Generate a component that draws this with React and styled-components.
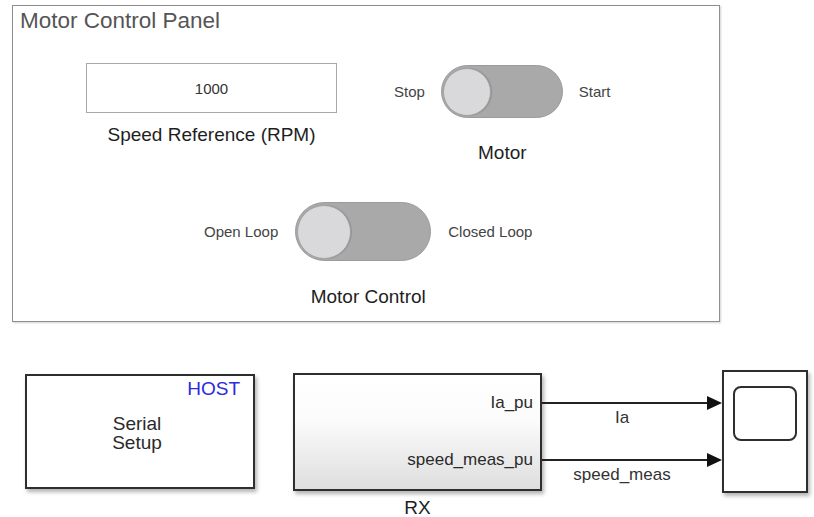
import React from "react";
import styled, { createGlobalStyle } from "styled-components";

const Global = createGlobalStyle`
  html, body { margin: 0; padding: 0; background: #fff; }
  body { font-family: "Liberation Sans", Arial, Helvetica, sans-serif; }
`;

const Page = styled.div`
  width: 814px;
  height: 517px;
  overflow: hidden;
  display: flex;
  flex-direction: column;
  & > * { flex-shrink: 0; }
`;

const Panel = styled.section`
  margin: 5px 0 0 12px;
  width: 708px;
  height: 317px;
  box-sizing: border-box;
  border: 1px solid #8e8e8e;
  box-shadow: 1px 1px 2px rgba(0, 0, 0, 0.18);
  display: flex;
  flex-direction: column;
`;

const Title = styled.h1`
  margin: 2px 0 0 7px;
  font-size: 22.5px;
  font-weight: normal;
  line-height: 26px;
  color: #555;
  white-space: nowrap;
`;

const Row = styled.div`
  display: flex;
  align-items: flex-start;
  margin-top: ${(p) => p.$top}px;
  padding-left: ${(p) => p.$left}px;
`;

const Group = styled.div`
  display: flex;
  flex-direction: column;
  align-items: center;
  margin-left: ${(p) => p.$left || 0}px;
  margin-top: ${(p) => p.$top || 0}px;
`;

const NumberBox = styled.div`
  width: 251px;
  height: 50px;
  box-sizing: border-box;
  border: 1px solid #a8a8a8;
  display: flex;
  align-items: center;
  justify-content: center;
  font-size: 15px;
  color: #333;
`;

const Caption = styled.div`
  margin-top: ${(p) => p.$gap}px;
  font-size: 19px;
  line-height: 22px;
  color: #1e1e1e;
  white-space: nowrap;
`;

const SwitchRow = styled.div`
  display: flex;
  align-items: center;
  gap: ${(p) => p.$gap}px;
`;

const SideLabel = styled.span`
  font-size: 15px;
  color: #444;
  white-space: nowrap;
`;

const Track = styled.div`
  width: ${(p) => p.$w}px;
  height: ${(p) => p.$h}px;
  box-sizing: border-box;
  border-radius: ${(p) => p.$h / 2}px;
  background: #a9a9a9;
  border: 1px solid #9b9b9b;
  display: flex;
  align-items: center;
  padding-left: 1px;
`;

const Knob = styled.div`
  width: ${(p) => p.$d}px;
  height: ${(p) => p.$d}px;
  box-sizing: border-box;
  border-radius: 50%;
  background: #d9d9dc;
  border: 1px solid #a3a3a3;
  box-shadow: 1px 0 1px rgba(0, 0, 0, 0.15);
`;

const Toggle = ({ left, right, w, h, gap }) => (
  <SwitchRow $gap={gap}>
    <SideLabel>{left}</SideLabel>
    <Track $w={w} $h={h}>
      <Knob $d={h - 5} />
    </Track>
    <SideLabel>{right}</SideLabel>
  </SwitchRow>
);

const Diagram = styled.div`
  display: flex;
  align-items: flex-start;
  margin-top: 48px;
`;

const Block = styled.div`
  box-sizing: border-box;
  border: 2px solid #2e2e2e;
  box-shadow: 2px 3px 4px rgba(0, 0, 0, 0.3);
  background: #fff;
  color: #2a2a2a;
`;

const SerialBlock = styled(Block)`
  width: 230px;
  height: 115px;
  margin: 4px 0 0 25px;
  display: flex;
  flex-direction: column;
`;

const HostTag = styled.div`
  align-self: flex-end;
  margin-top: 2px;
  padding-right: 13px;
  font-size: 19px;
  line-height: 22px;
  color: #2a2ae0;
`;

const BlockText = styled.div`
  margin-top: 14px;
  padding-right: 6px;
  text-align: center;
  font-size: 19px;
  line-height: 19px;
`;

const RxColumn = styled.div`
  display: flex;
  flex-direction: column;
  align-items: center;
  margin: 3px 0 0 38px;
`;

const RxBlock = styled(Block)`
  width: 249px;
  height: 118px;
  background: linear-gradient(to bottom, #ffffff 0%, #fbfbfb 40%, #dedede 100%);
  display: flex;
  flex-direction: column;
  align-items: flex-end;
  padding-right: 7px;
`;

const Port = styled.div`
  margin-top: ${(p) => p.$top}px;
  font-size: 17px;
  line-height: 20px;
  color: #2a2a2a;
`;

const Connector = styled.div`
  width: 180px;
  padding-top: 26px;
  display: flex;
  flex-direction: column;
`;

const Signal = styled.div`
  display: flex;
  flex-direction: column;
  margin-top: ${(p) => p.$top || 0}px;
`;

const SignalLabel = styled.div`
  padding-right: 20px;
  text-align: center;
  font-size: 17px;
  line-height: 16px;
  color: #333;
`;

const Arrow = () => (
  <svg width="180" height="14" viewBox="0 0 180 14" style={{ display: "block" }}>
    <line x1="0" y1="7" x2="167" y2="7" stroke="#222" strokeWidth="2" />
    <polygon points="165,0 180,7 165,14" fill="#111" />
  </svg>
);

const ScopeBlock = styled(Block)`
  width: 86px;
  height: 123px;
  padding: 14px 0 0 9px;
`;

const Screen = styled.div`
  width: 64px;
  height: 55px;
  box-sizing: border-box;
  border: 2px solid #2e2e2e;
  border-radius: 8px;
`;

export default function App() {
  return (
    <Page>
      <Global />
      <Panel>
        <Title>Motor Control Panel</Title>
        <Row $top={29} $left={73}>
          <Group>
            <NumberBox>1000</NumberBox>
            <Caption $gap={11}>Speed Reference (RPM)</Caption>
          </Group>
          <Group $left={57} $top={2}>
            <Toggle left="Stop" right="Start" w={122} h={53} gap={16} />
            <Caption $gap={24}>Motor</Caption>
          </Group>
        </Row>
        <Row $top={38} $left={191}>
          <Group>
            <Toggle left="Open Loop" right="Closed Loop" w={136} h={59} gap={17} />
            <Caption $gap={25}>Motor Control</Caption>
          </Group>
        </Row>
      </Panel>
      <Diagram>
        <SerialBlock>
          <HostTag>HOST</HostTag>
          <BlockText>
            Serial
            <br />
            Setup
          </BlockText>
        </SerialBlock>
        <RxColumn>
          <RxBlock>
            <Port $top={18}>Ia_pu</Port>
            <Port $top={37}>speed_meas_pu</Port>
          </RxBlock>
          <Caption $gap={6}>RX</Caption>
        </RxColumn>
        <Connector>
          <Signal>
            <Arrow />
            <SignalLabel>Ia</SignalLabel>
          </Signal>
          <Signal $top={27}>
            <Arrow />
            <SignalLabel>speed_meas</SignalLabel>
          </Signal>
        </Connector>
        <ScopeBlock>
          <Screen />
        </ScopeBlock>
      </Diagram>
    </Page>
  );
}
